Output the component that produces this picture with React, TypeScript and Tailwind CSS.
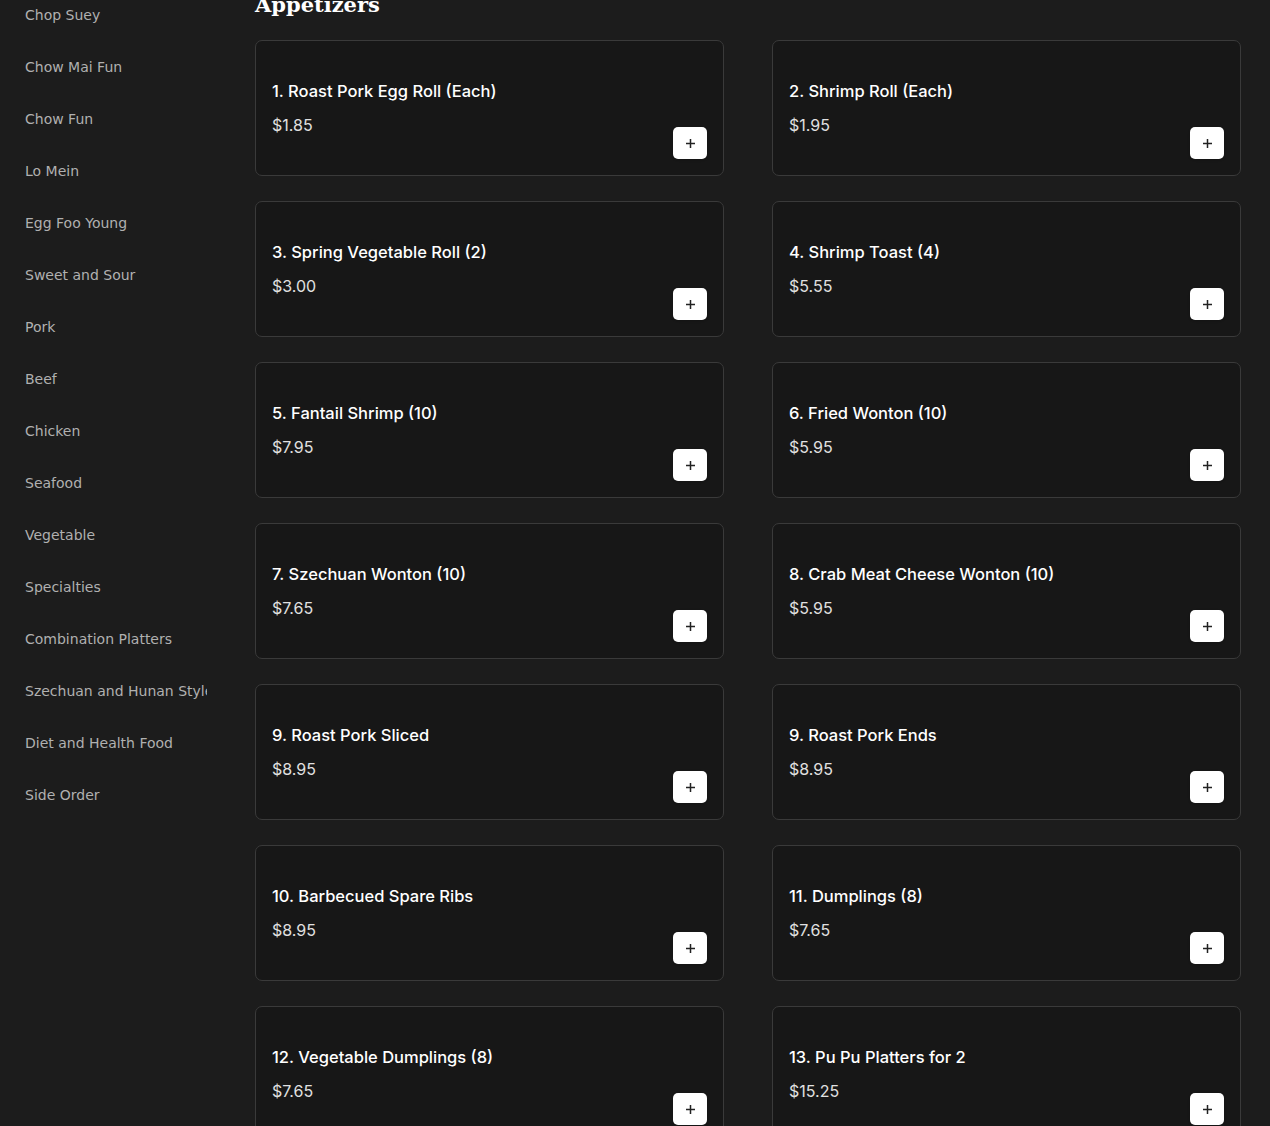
import React from "react";

const cats = [
  "Chop Suey",
  "Chow Mai Fun",
  "Chow Fun",
  "Lo Mein",
  "Egg Foo Young",
  "Sweet and Sour",
  "Pork",
  "Beef",
  "Chicken",
  "Seafood",
  "Vegetable",
  "Specialties",
  "Combination Platters",
  "Szechuan and Hunan Style",
  "Diet and Health Food",
  "Side Order",
];

const items: [string, string][] = [
  ["1. Roast Pork Egg Roll (Each)", "$1.85"],
  ["2. Shrimp Roll (Each)", "$1.95"],
  ["3. Spring Vegetable Roll (2)", "$3.00"],
  ["4. Shrimp Toast (4)", "$5.55"],
  ["5. Fantail Shrimp (10)", "$7.95"],
  ["6. Fried Wonton (10)", "$5.95"],
  ["7. Szechuan Wonton (10)", "$7.65"],
  ["8. Crab Meat Cheese Wonton (10)", "$5.95"],
  ["9. Roast Pork Sliced", "$8.95"],
  ["9. Roast Pork Ends", "$8.95"],
  ["10. Barbecued Spare Ribs", "$8.95"],
  ["11. Dumplings (8)", "$7.65"],
  ["12. Vegetable Dumplings (8)", "$7.65"],
  ["13. Pu Pu Platters for 2", "$15.25"],
];

function PlusIcon() {
  return (
    <svg width="11" height="11" viewBox="0 0 11 11" fill="none">
      <path d="M5.5 1v9M1 5.5h9" stroke="#222" strokeWidth="1.5" />
    </svg>
  );
}

export default function App() {
  return (
    <div className="h-[1126px] w-[1270px] overflow-hidden bg-[#1c1c1c]">
      <div className="flex -mt-[11px]">
        <aside className="w-[207px] shrink-0 overflow-hidden">
          {cats.map((c) => (
            <div
              key={c}
              className="h-[52px] flex items-center pl-[25px] whitespace-nowrap text-[14px] text-[#b0b0b0]"
              style={{ fontFamily: '"DejaVu Sans", sans-serif' }}
            >
              {c}
            </div>
          ))}
        </aside>
        <main className="ml-[48px] w-[986px]">
          <h2
            className="text-[21px] leading-[32px] font-bold text-white"
            style={{ fontFamily: '"DejaVu Serif", serif' }}
          >
            Appetizers
          </h2>
          <div className="mt-[19px] grid grid-cols-[469px_469px] gap-x-[48px] gap-y-[25px]">
            {items.map(([name, price]) => (
              <div
                key={name}
                className="h-[136px] rounded-[7px] border border-[#3a3a3a] bg-[#171717] p-4 flex items-end justify-between"
              >
                <div className="self-stretch pt-[22px]">
                  <div
                    className="text-[16.5px] leading-[24px] font-medium text-white"
                    style={{ fontFamily: 'Inter, sans-serif' }}
                  >
                    {name}
                  </div>
                  <div
                    className="mt-[10px] text-[16px] leading-[24px] text-[#e0e0e0]"
                    style={{ fontFamily: 'Inter, sans-serif' }}
                  >
                    {price}
                  </div>
                </div>
                <button className="w-[34px] h-[32px] rounded-[5px] bg-white flex items-center justify-center shadow">
                  <PlusIcon />
                </button>
              </div>
            ))}
          </div>
        </main>
      </div>
    </div>
  );
}
